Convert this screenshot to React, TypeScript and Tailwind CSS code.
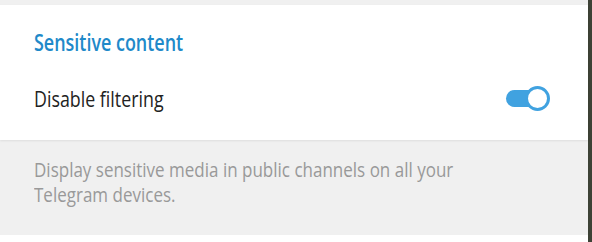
export default function App() {
  return (
    <div className="flex h-[242px] w-[592px] bg-white font-['Open_Sans',sans-serif]">
      <div className="flex flex-1 flex-col">
        <div className="h-[5px] bg-[#f0f0f0]" />
        <div className="relative z-10 h-[135px] bg-white px-[34px] pt-[22px] shadow-[0_1px_2px_rgba(0,0,0,0.08)]">
          <div className="origin-left scale-x-[0.78] whitespace-nowrap text-[23px] font-semibold leading-[30px] text-[#2089c9]">
            Sensitive content
          </div>
          <div className="mt-[26px] flex h-[30px] items-center justify-between">
            <span className="origin-left scale-x-[0.81] whitespace-nowrap text-[22px] leading-[30px] text-[#222]">
              Disable filtering
            </span>
            <div className="relative mr-[4px] h-[25px] w-[44px]">
              <div className="absolute left-0 top-[4px] h-[17px] w-[36px] rounded-full bg-[#40a2e0]" />
              <div className="absolute right-0 top-0 h-[25px] w-[25px] rounded-full border-[3px] border-[#40a2e0] bg-white" />
            </div>
          </div>
        </div>
        <div className="h-[95px] bg-[#f0f0f0] px-[34px] pt-[17px]">
          <p className="origin-left scale-x-[0.85] whitespace-nowrap text-[20px] leading-[25px] text-[#999]">
            Display sensitive media in public channels on all your
            <br />
            Telegram devices.
          </p>
        </div>
        <div className="flex-1 bg-white" />
      </div>
      <div className="w-[4px] bg-[#3d4236]" />
    </div>
  );
}
